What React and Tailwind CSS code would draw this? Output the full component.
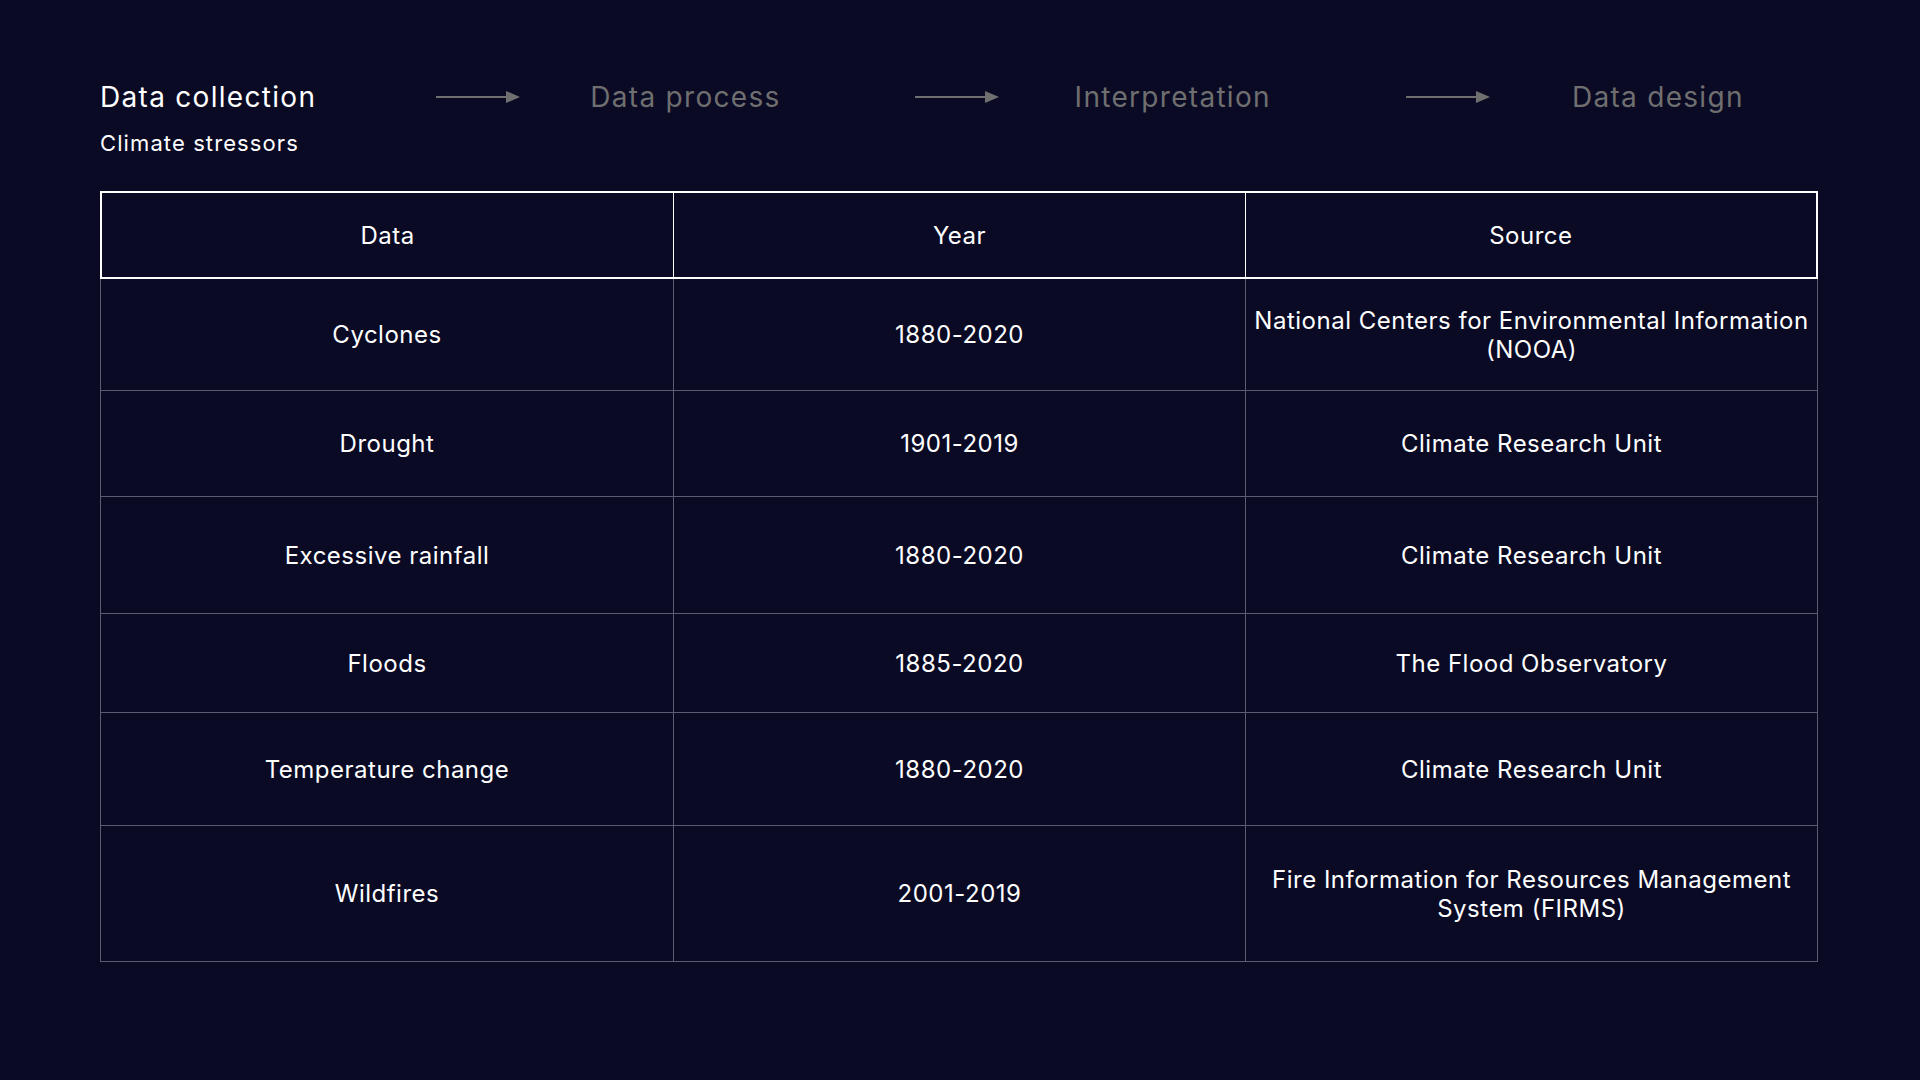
import React from "react";

const steps = ["Data collection", "Data process", "Interpretation", "Data design"];

const rows = [
  { data: "Cyclones", year: "1880-2020", source: "National Centers for Environmental Information (NOOA)", h: "h-[112px]" },
  { data: "Drought", year: "1901-2019", source: "Climate Research Unit", h: "h-[106px]" },
  { data: "Excessive rainfall", year: "1880-2020", source: "Climate Research Unit", h: "h-[117px]" },
  { data: "Floods", year: "1885-2020", source: "The Flood Observatory", h: "h-[99px]" },
  { data: "Temperature change", year: "1880-2020", source: "Climate Research Unit", h: "h-[113px]" },
  { data: "Wildfires", year: "2001-2019", source: "Fire Information for Resources Management System (FIRMS)", h: "h-[136px]" },
];

function Arrow() {
  return (
    <svg width="84" height="14" viewBox="0 0 84 14" className="shrink-0 block">
      <line x1="0" y1="7" x2="72" y2="7" stroke="#6f6f6f" strokeWidth="2" />
      <polygon points="70,1 84,7 70,13" fill="#6f6f6f" />
    </svg>
  );
}

function App() {
  return (
    <div
      className="min-h-screen w-full bg-[#0a0a25] text-white px-[100px] pt-[80px]"
      style={{ fontFamily: "Inter, 'Noto Sans', sans-serif" }}
    >
      {/* Stepper */}
      <div className="flex items-center h-[34px] text-[28px] leading-[34px] tracking-[1.3px]">
        <span className="text-white">{steps[0]}</span>
        <span className="ml-[120px]"><Arrow /></span>
        <span className="ml-[70px] text-[#6f6f6f]">{steps[1]}</span>
        <span className="ml-[134px]"><Arrow /></span>
        <span className="ml-[76px] text-[#6f6f6f]">{steps[2]}</span>
        <span className="ml-[135px]"><Arrow /></span>
        <span className="ml-[82px] text-[#6f6f6f]">{steps[3]}</span>
      </div>
      <div className="mt-[15px] text-[22px] leading-[28px] tracking-[1.1px]">Climate stressors</div>

      {/* Table */}
      <div className="mt-[34px] w-[1718px] text-[24px] leading-[29px] tracking-[0.5px]">
        <div className="grid grid-cols-3 h-[88px] border-2 border-white">
          <div className="flex items-center justify-center">Data</div>
          <div className="flex items-center justify-center border-l border-white">Year</div>
          <div className="flex items-center justify-center border-l border-white">Source</div>
        </div>
        {rows.map((r, i) => (
          <div key={i} className={`grid grid-cols-3 border-x border-b border-[#5d5d72] ${r.h}`}>
            <div className="flex items-center justify-center text-center px-2">{r.data}</div>
            <div className="flex items-center justify-center text-center px-2 border-l border-[#5d5d72]">{r.year}</div>
            <div className="flex items-center justify-center text-center px-2 border-l border-[#5d5d72]">{r.source}</div>
          </div>
        ))}
      </div>
    </div>
  );
}

export default App;
